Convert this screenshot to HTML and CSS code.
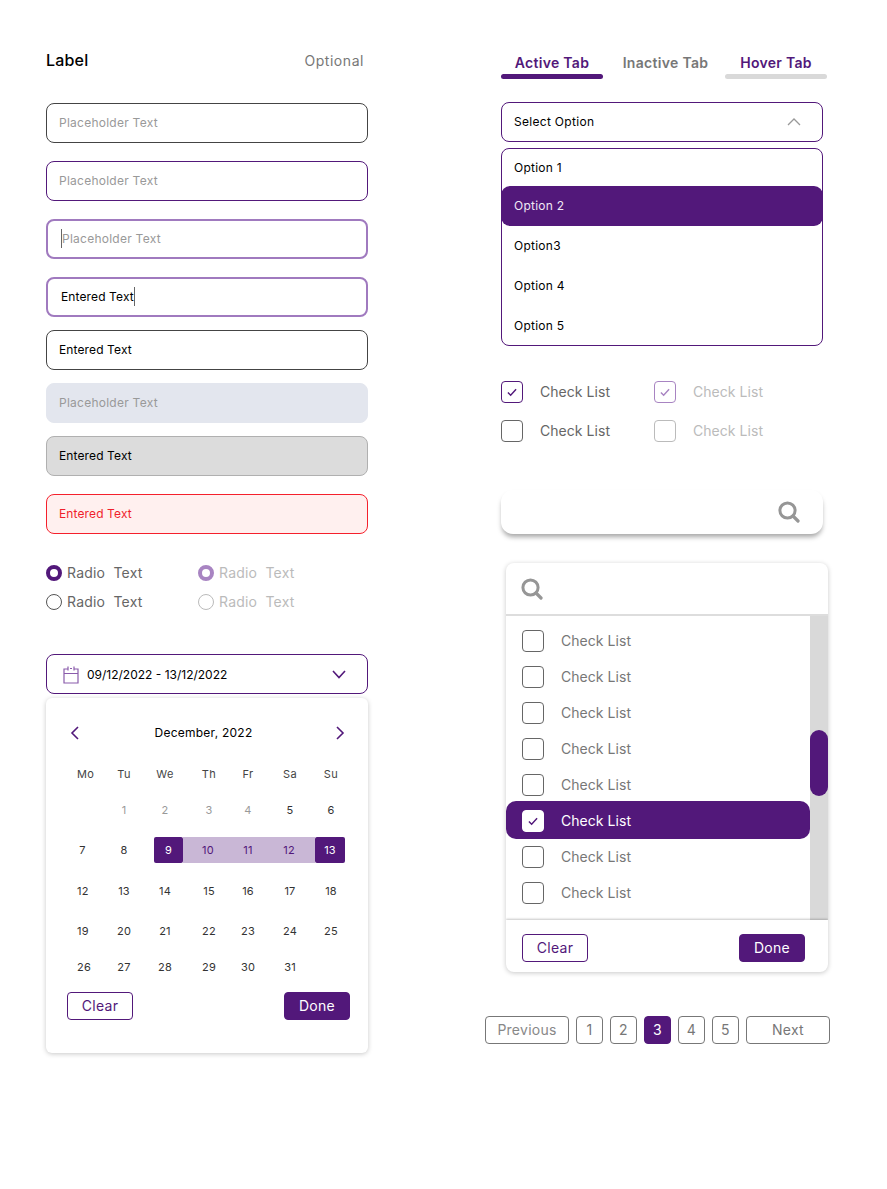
FILE: index.html
```html
<!DOCTYPE html>
<html lang="en">
<head>
<meta charset="utf-8">
<title>UI Components</title>
<link rel="stylesheet" href="styles.css">
</head>
<body>
<svg class="defs" aria-hidden="true">
  <symbol id="tick" viewBox="0 0 22 22"><path d="M6.5 11.5l3 3 6-6.5" fill="none" stroke="currentColor" stroke-width="1.6"/></symbol>
  <symbol id="search" viewBox="0 0 22 22"><circle cx="9.5" cy="9.5" r="7.6" fill="none" stroke="currentColor" stroke-width="3"/><path d="M15 15l5 5" fill="none" stroke="currentColor" stroke-width="3.2" stroke-linecap="round"/></symbol>
</svg>
<main class="page">
  <section class="col col-left">
    <div class="label-row"><span class="label">Label</span><span class="optional">Optional</span></div>
    <div class="fields">
      <div class="field field-default ph">Placeholder Text</div>
      <div class="field field-purple ph">Placeholder Text</div>
      <div class="field field-focus ph"><i class="caret"></i>Placeholder Text</div>
      <div class="field field-focus val">Entered Text<i class="caret"></i></div>
      <div class="field field-default val tight">Entered Text</div>
      <div class="field field-disabled ph tight">Placeholder Text</div>
      <div class="field field-readonly val tight">Entered Text</div>
      <div class="field field-error val">Entered Text</div>
    </div>
    <div class="radios">
      <div class="radio-item"><i class="radio radio-on"></i><span class="txt">Radio  Text</span></div>
      <div class="radio-item dim"><i class="radio radio-on"></i><span class="txt">Radio  Text</span></div>
      <div class="radio-item"><i class="radio"></i><span class="txt">Radio  Text</span></div>
      <div class="radio-item dim"><i class="radio"></i><span class="txt">Radio  Text</span></div>
    </div>
    <div class="date-select">
      <svg class="cal-icon" viewBox="0 0 16 18"><path d="M5 3H1v14h14V3h-4M1 7.5h14M5 .5v4M11 .5v4M7 2.5h2" fill="none" stroke="currentColor" stroke-width="1.2"/></svg>
      <span class="date-text">09/12/2022 - 13/12/2022</span>
      <svg class="chev-down" viewBox="0 0 14 9"><path d="M1 1l6 6.5L13 1" fill="none" stroke="currentColor" stroke-width="1.6"/></svg>
    </div>
    <div class="calendar">
      <div class="cal-head">
        <svg class="cal-arrow" viewBox="0 0 9 14"><path d="M8 1L2 7l6 6" fill="none" stroke="currentColor" stroke-width="1.6"/></svg>
        <span class="month">December, 2022</span>
        <svg class="cal-arrow" viewBox="0 0 9 14"><path d="M1 1l6 6-6 6" fill="none" stroke="currentColor" stroke-width="1.6"/></svg>
      </div>
      <div class="cal-rows">
        <div class="week week-names"><span>Mo</span><span>Tu</span><span>We</span><span>Th</span><span>Fr</span><span>Sa</span><span>Su</span></div>
        <div class="week"><span></span><span class="muted">1</span><span class="muted">2</span><span class="muted">3</span><span class="muted">4</span><span>5</span><span>6</span></div>
        <div class="week-range">
          <span class="plain plain-first">7</span><span class="plain">8</span>
          <span class="range-end range-first">9</span>
          <div class="range-band"><span>10</span><span>11</span><span>12</span></div>
          <span class="range-end range-last">13</span>
        </div>
        <div class="week"><span>12</span><span>13</span><span>14</span><span>15</span><span>16</span><span>17</span><span>18</span></div>
        <div class="week"><span>19</span><span>20</span><span>21</span><span>22</span><span>23</span><span>24</span><span>25</span></div>
        <div class="week"><span>26</span><span>27</span><span>28</span><span>29</span><span>30</span><span>31</span><span></span></div>
      </div>
      <div class="actions cal-actions"><button class="btn btn-clear">Clear</button><button class="btn btn-done">Done</button></div>
    </div>
  </section>

  <section class="col col-right">
    <div class="tabs">
      <div class="tab tab-active">Active Tab</div>
      <div class="tab tab-inactive">Inactive Tab</div>
      <div class="tab tab-hover">Hover Tab</div>
    </div>
    <div class="select">
      <span>Select Option</span>
      <svg class="chev-up" viewBox="0 0 14 8"><path d="M1 7l6-6 6 6" fill="none" stroke="currentColor" stroke-width="1.3"/></svg>
    </div>
    <div class="options">
      <div class="option option-first">Option 1</div>
      <div class="option option-selected">Option 2</div>
      <div class="option">Option3</div>
      <div class="option">Option 4</div>
      <div class="option">Option 5</div>
    </div>
    <div class="checks">
      <div class="check-item"><span class="box box-on"><svg class="tick"><use href="#tick"/></svg></span><span class="txt">Check List</span></div>
      <div class="check-item dim"><span class="box box-on"><svg class="tick"><use href="#tick"/></svg></span><span class="txt">Check List</span></div>
      <div class="check-item"><span class="box"></span><span class="txt">Check List</span></div>
      <div class="check-item dim"><span class="box"></span><span class="txt">Check List</span></div>
    </div>
    <div class="searchbar"><svg class="search-icon"><use href="#search"/></svg></div>
    <div class="panel">
      <div class="panel-head"><svg class="search-icon"><use href="#search"/></svg></div>
      <div class="panel-body">
        <div class="panel-list">
          <div class="panel-item"><span class="box"></span><span class="txt">Check List</span></div>
          <div class="panel-item"><span class="box"></span><span class="txt">Check List</span></div>
          <div class="panel-item"><span class="box"></span><span class="txt">Check List</span></div>
          <div class="panel-item"><span class="box"></span><span class="txt">Check List</span></div>
          <div class="panel-item"><span class="box"></span><span class="txt">Check List</span></div>
          <div class="panel-item panel-item-on"><span class="box"><svg class="tick"><use href="#tick"/></svg></span><span class="txt">Check List</span></div>
          <div class="panel-item"><span class="box"></span><span class="txt">Check List</span></div>
          <div class="panel-item"><span class="box"></span><span class="txt">Check List</span></div>
        </div>
        <div class="scrollbar"><div class="thumb"></div></div>
      </div>
      <div class="actions panel-actions"><button class="btn btn-clear">Clear</button><button class="btn btn-done">Done</button></div>
    </div>
    <nav class="pager">
      <span class="pg pg-wide pg-prev">Previous</span>
      <span class="pg">1</span><span class="pg">2</span><span class="pg pg-on">3</span><span class="pg">4</span><span class="pg">5</span>
      <span class="pg pg-wide">Next</span>
    </nav>
  </section>
</main>
</body>
</html>
```

FILE: styles.css
```css
* { box-sizing: border-box; }
html, body { margin: 0; background: #fff; }
body { font-family: Inter, "Liberation Sans", sans-serif; color: #000; }
.defs { display: none; }
.page { display: flex; width: 887px; height: 1189px; padding: 48px 0 0 46px; overflow: hidden; }
.col { display: flex; flex-direction: column; }
.col-left { width: 322px; margin-right: 117px; }
.col-right { width: 345px; padding-top: 4px; }
.txt { margin-bottom: 2px; }

/* left: fields */
.label-row { display: flex; justify-content: space-between; align-items: center; height: 24px; margin-bottom: 31px; padding-right: 4px; }
.label { font-size: 16px; font-weight: 500; letter-spacing: .2px; }
.optional { font-size: 14px; color: #777; letter-spacing: .55px; }
.fields { display: flex; flex-direction: column; }
.field { display: flex; align-items: center; height: 40px; margin-bottom: 18px; padding: 0 12px 2px; border: 1px solid #444; border-radius: 8px; font-size: 12px; letter-spacing: .25px; color: #000; }
.fields .field:last-child { margin-bottom: 0; }
.ph { color: #999; }
.val { letter-spacing: .12px; }
.tight { margin-top: -5px; }
.field-purple { border-color: #52187a; }
.field-focus { padding: 0 13px 2px; border: 2px solid #a07abf; }
.field-disabled { background: #e3e6ee; border-color: #e3e6ee; }
.field-readonly { background: #dcdcdc; border-color: #b0b0b0; }
.field-error { background: #fff0ef; border-color: #f5202c; color: #f01e2c; }
.caret { display: inline-block; width: 1px; height: 19px; background: #666; }

/* radios */
.radios { display: grid; grid-template-columns: 152px 170px; row-gap: 7px; margin-top: 28px; }
.radio-item { display: flex; align-items: center; gap: 5px; height: 22px; font-size: 14px; white-space: pre; color: #666; letter-spacing: .2px; }
.radio { width: 16px; height: 16px; border: 1px solid #555; border-radius: 50%; background: #fff; }
.radio-on { border: 4.5px solid #52187a; }
.dim { color: #bbb; }
.dim .radio { border-color: #bbb; }
.dim .radio-on { border-color: #a884c2; }

/* date */
.date-select { display: flex; align-items: center; height: 40px; margin-top: 41px; padding: 0 21px 0 16px; border: 1px solid #52187a; border-radius: 8px; }
.cal-icon { width: 16px; height: 18px; margin: 1px 8px 0 0; color: #8a5cab; }
.date-text { flex: 1; margin-top: 1px; font-size: 12px; letter-spacing: 0; }
.chev-down { width: 14px; height: 9px; margin-top: 1px; color: #52187a; }
.calendar { display: flex; flex-direction: column; height: 355px; margin-top: 4px; padding: 17px 0 0 18px; border-radius: 6px; background: #fff; box-shadow: 0 1px 5px rgba(0,0,0,.22); }
.cal-head { display: flex; align-items: center; justify-content: space-between; height: 36px; margin-bottom: 5px; padding: 0 23px 0 6px; }
.cal-arrow { width: 9px; height: 14px; color: #52187a; }
.month { margin: 0 8px 2px 0; font-size: 12px; letter-spacing: .25px; }
.cal-rows { display: grid; grid-template-rows: 36px 36px 44px 38px 42px 30px; font-size: 11px; color: #333; letter-spacing: .2px; }
.week { display: grid; grid-template-columns: 40px 40px 42px 46px 32px 52px 30px; align-items: center; text-align: center; }
.week span:first-child { padding-left: 13px; text-align: left; }
.week-names { letter-spacing: .35px; color: #444; }
.muted { color: #999; }
.week-range { display: flex; align-items: center; text-align: center; }
.plain { width: 40px; }
.plain-first { width: 37px; margin-right: 3px; }
.range-end { width: 29px; height: 26px; line-height: 26px; background: #52187a; color: #fff; border-radius: 2px; }
.range-first { margin-left: 10px; }
.range-last { width: 30px; }
.range-band { display: grid; grid-template-columns: 50px 30px 52px; align-items: center; width: 132px; height: 26px; background: #c9b7d6; color: #52187a; }
.actions { display: flex; justify-content: space-between; }
.cal-actions { margin-top: 10px; padding: 0 18px 0 3px; }
.btn { width: 66px; height: 28px; padding: 0 0 2px; border: 1px solid #52187a; border-radius: 4px; font: 14px Inter, "Liberation Sans", sans-serif; letter-spacing: .3px; cursor: pointer; }
.btn-clear { background: #fff; color: #52187a; }
.btn-done { background: #52187a; color: #fff; }

/* right: tabs */
.tabs { display: flex; justify-content: space-between; width: 326px; margin-left: 16px; }
.tab { width: 102px; font-size: 14px; font-weight: 600; line-height: 22px; text-align: center; letter-spacing: .3px; white-space: nowrap; }
.tab::after { content: ""; display: block; height: 5px; border-radius: 3px; }
.tab-active { color: #52187a; }
.tab-active::after { background: #52187a; }
.tab-inactive { padding-left: 3px; color: #777; }
.tab-hover { color: #52187a; }
.tab-hover::after { background: #d9d9d9; }

/* select */
.select { display: flex; align-items: center; justify-content: space-between; width: 322px; height: 40px; margin: 23px 0 0 16px; padding: 0 21px 2px 12px; border: 1px solid #52187a; border-radius: 8px; font-size: 12px; letter-spacing: .3px; }
.chev-up { width: 14px; height: 8px; margin-top: 2px; color: #999; }
.options { display: flex; flex-direction: column; width: 322px; height: 198px; margin: 6px 0 0 16px; border: 1px solid #52187a; border-radius: 8px; font-size: 12px; letter-spacing: .25px; }
.option { display: flex; align-items: center; flex: none; height: 40px; padding: 0 0 2px 12px; }
.option-first { height: 37px; padding-bottom: 0; }
.option-selected { margin: 0 -1px; padding-left: 13px; background: #52187a; color: #f0e8f5; border-radius: 9px; }

/* checks */
.checks { display: grid; grid-template-columns: 153px 170px; row-gap: 17px; margin: 35px 0 0 16px; }
.check-item { display: flex; align-items: center; gap: 17px; height: 22px; font-size: 14px; color: #666; letter-spacing: .05px; }
.check-item.dim { color: #bbb; }
.box { flex: none; width: 22px; height: 22px; border: 1px solid #666; border-radius: 4px; background: #fff; color: #52187a; }
.box-on { border-color: #52187a; }
.dim .box { border-color: #bbb; }
.dim .box-on { border-color: #a884c2; color: #a884c2; }
.tick { display: block; width: 20px; height: 20px; }

/* search */
.searchbar { display: flex; align-items: center; justify-content: flex-end; width: 322px; height: 44px; margin: 48px 0 0 16px; padding-right: 23px; border-radius: 12px; background: #fff; box-shadow: 0 4px 5px -1px rgba(0,0,0,.35); }
.search-icon { width: 22px; height: 22px; color: #969696; }
.panel { display: flex; flex-direction: column; width: 322px; height: 409px; margin: 29px 0 0 21px; border-radius: 8px; background: #fff; box-shadow: 0 1px 5px rgba(0,0,0,.22); overflow: hidden; }
.panel-head { display: flex; align-items: center; flex: none; height: 53px; padding-left: 15px; border-bottom: 2px solid #ddd; }
.panel-body { display: flex; flex: none; height: 304px; }
.panel-list { flex: none; width: 304px; padding-top: 7px; }
.panel-item { display: flex; align-items: center; gap: 17px; height: 36px; padding-left: 16px; font-size: 14px; color: #777; letter-spacing: .05px; }
.panel-item-on { height: 38px; margin-top: -2px; padding-top: 2px; background: #52187a; color: #fff; border-radius: 10px; }
.panel-item-on .box { border-color: #fff; }
.scrollbar { flex: none; width: 18px; padding-top: 114px; background: #d9d9d9; }
.thumb { height: 66px; border-radius: 9px; background: #52187a; }
.panel-actions { position: relative; align-items: center; flex: none; height: 52px; padding: 4px 23px 0 16px; box-shadow: 0 -1px 2px rgba(0,0,0,.22); }

/* pager */
.pager { display: flex; gap: 7px; margin-top: 44px; }
.pg { display: flex; align-items: center; justify-content: center; width: 27px; height: 28px; padding-bottom: 2px; border: 1px solid #777; border-radius: 4px; font-size: 14px; color: #777; letter-spacing: .25px; }
.pg-wide { width: 84px; }
.pg-prev { color: #888; }
.pg-on { background: #52187a; border-color: #52187a; color: #fff; }
```
